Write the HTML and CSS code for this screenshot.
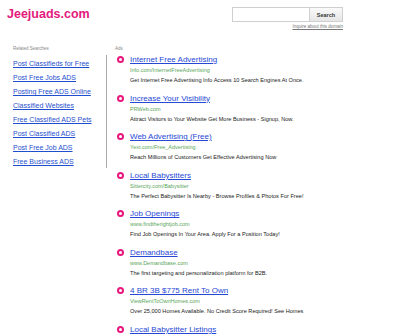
FILE: index.html
```html
<!DOCTYPE html>
<html>
<head>
  <meta charset="UTF-8">
  <title>Jeejuads.com</title>
  <link rel="stylesheet" href="styles.css">
</head>
<body>
  <div id="header">
    <div id="logo">Jeejuads.com</div>
    <div id="searchBox">
      <div class="search-row">
        <input type="text" class="search-input">
        <button class="search-button">Search</button>
      </div>
      <a href="#" class="inquire">Inquire about this domain</a>
    </div>
  </div>
  <div id="main">
    <div id="related">
      <div class="label">Related Searches</div>
      <ul class="related-list">
        <li><a href="#">Post Classifieds for Free</a></li>
        <li><a href="#">Post Free Jobs ADS</a></li>
        <li><a href="#">Posting Free ADS Online</a></li>
        <li><a href="#">Classified Websites</a></li>
        <li><a href="#">Free Classified ADS Pets</a></li>
        <li><a href="#">Post Classified ADS</a></li>
        <li><a href="#">Post Free Job ADS</a></li>
        <li><a href="#">Free Business ADS</a></li>
      </ul>
    </div>
    <div id="ads">
      <div class="label">Ads</div>
      <div class="ad">
        <span class="bullet"></span>
        <div class="ad-body">
          <a href="#" class="ad-title">Internet Free Advertising</a>
          <div class="ad-url">Info.com/InternetFreeAdvertising</div>
          <div class="ad-desc">Get Internet Free Advertising Info Access 10 Search Engines At Once.</div>
        </div>
      </div>
      <div class="ad">
        <span class="bullet"></span>
        <div class="ad-body">
          <a href="#" class="ad-title">Increase Your Visibility</a>
          <div class="ad-url">PRWeb.com</div>
          <div class="ad-desc">Attract Visitors to Your Website Get More Business - Signup, Now.</div>
        </div>
      </div>
      <div class="ad">
        <span class="bullet"></span>
        <div class="ad-body">
          <a href="#" class="ad-title">Web Advertising (Free)</a>
          <div class="ad-url">Yext.com/Free_Advertising</div>
          <div class="ad-desc">Reach Millions of Customers Get Effective Advertising Now</div>
        </div>
      </div>
      <div class="ad">
        <span class="bullet"></span>
        <div class="ad-body">
          <a href="#" class="ad-title">Local Babysitters</a>
          <div class="ad-url">Sittercity.com/Babysitter</div>
          <div class="ad-desc">The Perfect Babysitter Is Nearby - Browse Profiles &amp; Photos For Free!</div>
        </div>
      </div>
      <div class="ad">
        <span class="bullet"></span>
        <div class="ad-body">
          <a href="#" class="ad-title">Job Openings</a>
          <div class="ad-url">www.findtherightjob.com</div>
          <div class="ad-desc">Find Job Openings In Your Area. Apply For a Position Today!</div>
        </div>
      </div>
      <div class="ad">
        <span class="bullet"></span>
        <div class="ad-body">
          <a href="#" class="ad-title">Demandbase</a>
          <div class="ad-url">www.Demandbase.com</div>
          <div class="ad-desc">The first targeting and personalization platform for B2B.</div>
        </div>
      </div>
      <div class="ad">
        <span class="bullet"></span>
        <div class="ad-body">
          <a href="#" class="ad-title">4 BR 3B $775 Rent To Own</a>
          <div class="ad-url">ViewRentToOwnHomes.com</div>
          <div class="ad-desc">Over 25,000 Homes Available. No Credit Score Required! See Homes</div>
        </div>
      </div>
      <div class="ad last">
        <span class="bullet"></span>
        <div class="ad-body">
          <a href="#" class="ad-title">Local Babysitter Listings</a>
        </div>
      </div>
    </div>
  </div>
</body>
</html>
```

FILE: styles.css
```css
body {
  margin: 0;
  font-family: 'Liberation Sans', Arial, sans-serif;
  background-color: #ffffff;
  color: #222;
  overflow: hidden;
}
#header {
  display: flex;
  justify-content: space-between;
  width: 336px;
  margin-left: 7px;
  padding-top: 7px;
}
#logo {
  font-size: 12.5px;
  font-weight: bold;
  color: #e3197d;
  line-height: 14px;
}
#searchBox {
  display: flex;
  flex-direction: column;
  align-items: flex-end;
}
.search-row {
  display: flex;
}
.search-input {
  width: 77px;
  height: 15px;
  box-sizing: border-box;
  border: 1px solid #cfcfcf;
  border-right: none;
  margin: 0;
  padding: 0;
}
.search-button {
  width: 34px;
  height: 15px;
  box-sizing: border-box;
  border: 1px solid #cfcfcf;
  background: linear-gradient(#fafafa, #e6e6e6);
  font-family: 'Liberation Sans', Arial, sans-serif;
  font-size: 5.5px;
  font-weight: bold;
  color: #333;
  margin: 0;
  padding: 0;
}
.inquire {
  font-size: 4.5px;
  color: #777;
  margin-top: 2px;
  line-height: 6px;
}
#main {
  display: flex;
  margin-top: 15px;
}
.label {
  font-size: 4.5px;
  color: #888;
  line-height: 8px;
}
#related {
  width: 94px;
  margin-left: 13px;
}
.related-list {
  list-style: none;
  margin: 2px 0 0 0;
  padding: 2px 0 0 0;
  border-right: 1px solid #aaa;
  height: 111px;
}
.related-list li {
  font-size: 7px;
  line-height: 14px;
}
.related-list a {
  color: #1f4fcf;
}
#ads {
  margin-left: 8px;
}
#ads .label {
  margin-bottom: 1px;
}
.ad {
  display: flex;
  margin-bottom: 7.57px;
}
.ad.last {
  margin-bottom: 0;
}
.bullet {
  width: 3px;
  height: 3px;
  border: 2px solid #e8177d;
  border-radius: 50%;
  margin: 2px 6.5px 0 1.5px;
  flex-shrink: 0;
}
.ad-body {
  display: flex;
  flex-direction: column;
}
.ad-title {
  font-size: 8px;
  line-height: 11px;
  color: #2748d4;
}
.ad-url {
  font-size: 5.5px;
  line-height: 10px;
  color: #5aa65a;
}
.ad-desc {
  font-size: 5.6px;
  line-height: 10px;
  color: #222;
  white-space: nowrap;
}
```
